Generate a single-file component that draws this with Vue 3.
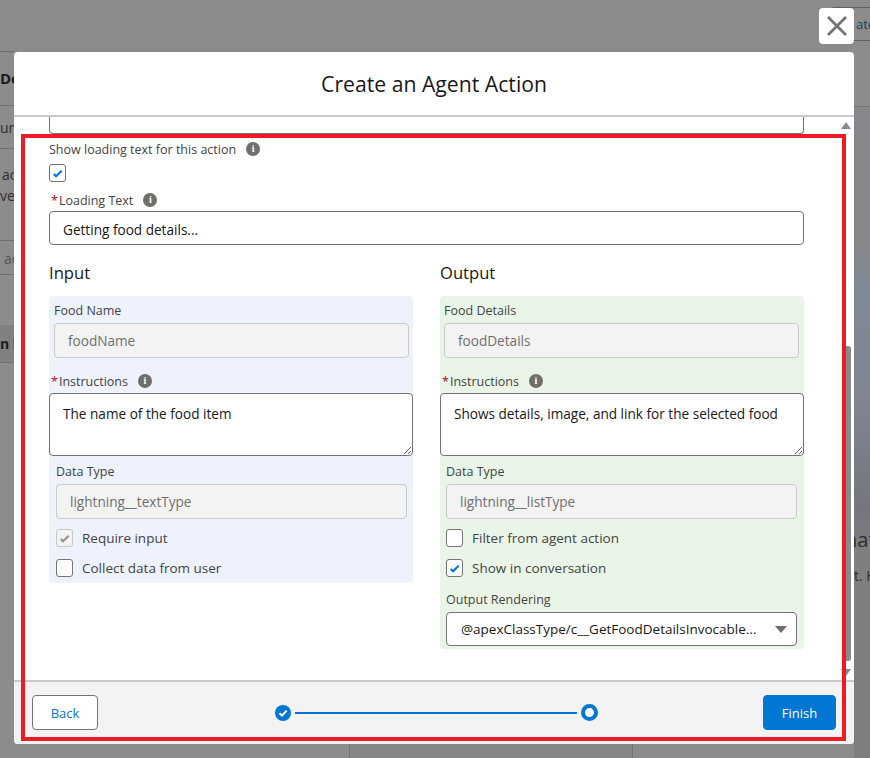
<template>
  <div class="page">
    <!-- dimmed page behind the modal -->
    <div class="backdrop">
      <div class="bg-line" style="top: 51px; width: 14px"></div>
      <div class="bg-line" style="top: 105px; width: 14px"></div>
      <div class="bg-line" style="top: 148px; width: 14px"></div>
      <div class="bg-line" style="top: 240px; width: 14px"></div>
      <div class="bg-line" style="top: 274px; width: 14px"></div>
      <div class="bg-line" style="top: 362px; width: 14px"></div>
      <div class="bg-band"></div>
      <div class="bg-image"></div>
      <div class="bg-bottom"></div>
      <span class="bg-text bold" style="left: 0; top: 67px">De</span>
      <span class="bg-text" style="left: 0; top: 118px">ur</span>
      <span class="bg-text" style="left: 2px; top: 165px">ac</span>
      <span class="bg-text" style="left: 0; top: 186px">ve</span>
      <span class="bg-text faint" style="left: 4px; top: 249px">ac</span>
      <span class="bg-text bold small" style="left: 0; top: 333px">n l</span>
      <span class="bg-text big" style="left: 845px; top: 528px">nat</span>
      <span class="bg-text" style="left: 854px; top: 566px">t. H</span>
      <span class="bg-btn">ato</span>
    </div>

    <button class="close-btn">
      <svg width="20" height="20" viewBox="0 0 20 20">
        <path d="M1 1 L19 19 M19 1 L1 19" stroke="#747474" stroke-width="2.8" fill="none" />
      </svg>
    </button>

    <div class="modal">
      <header class="modal-header">Create an Agent Action</header>

      <div class="modal-body">
        <div class="clipped-input"></div>

        <div class="label-row top-label">
          <span>Show loading text for this action</span>
          <span class="info">i</span>
        </div>
        <span class="check"><svg viewBox="0 0 12 12"><path d="M3 6.8 L4.8 8.6 L9.4 4.2" /></svg></span>

        <div class="label-row loading-label">
          <span class="req">*</span><span>Loading Text</span>
          <span class="info">i</span>
        </div>
        <input class="field loading-input" value="Getting food details..." readonly />

        <div class="columns">
          <section v-for="col in columns" :key="col.title" class="column">
            <h3>{{ col.title }}</h3>
            <div class="panel" :class="col.tone">
              <div class="name-block">
                <label>{{ col.nameLabel }}</label>
                <input class="field disabled" :value="col.name" readonly />
              </div>
              <div class="label-row instr-label">
                <span class="req">*</span><span>Instructions</span>
                <span class="info">i</span>
              </div>
              <textarea class="field area" :value="col.instructions" readonly></textarea>
              <div class="type-block">
                <label>Data Type</label>
                <input class="field disabled" :value="col.type" readonly />
                <div v-for="opt in col.options" :key="opt.text" class="option">
                  <span class="check" :class="{ off: opt.disabled }">
                    <svg v-if="opt.checked" viewBox="0 0 12 12"><path d="M3 6.8 L4.8 8.6 L9.4 4.2" /></svg>
                  </span>
                  <span>{{ opt.text }}</span>
                </div>
                <div v-if="col.rendering" class="rendering">
                  <label>Output Rendering</label>
                  <div class="field select">
                    <span>{{ col.rendering }}</span>
                    <i class="caret"></i>
                  </div>
                </div>
              </div>
            </div>
          </section>
        </div>

        <div class="scroll-up"></div>
        <div class="scroll-thumb"></div>
        <div class="scroll-down"></div>
      </div>

      <footer class="modal-footer">
        <button class="btn">Back</button>
        <div class="progress">
          <svg class="step" width="16" height="16" viewBox="0 0 16 16">
            <circle cx="8" cy="8" r="8" fill="#0176d3" />
            <path d="M4.4 8.2 L7 10.6 L11.6 5.6" stroke="#fff" stroke-width="2" fill="none" />
          </svg>
          <div class="bar"></div>
          <span class="ring"></span>
        </div>
        <button class="btn brand">Finish</button>
      </footer>
    </div>

    <div class="annotation"></div>
  </div>
</template>

<script setup>
const columns = [
  {
    title: "Input",
    tone: "blue",
    nameLabel: "Food Name",
    name: "foodName",
    instructions: "The name of the food item",
    type: "lightning__textType",
    options: [
      { text: "Require input", checked: true, disabled: true },
      { text: "Collect data from user", checked: false },
    ],
  },
  {
    title: "Output",
    tone: "green",
    nameLabel: "Food Details",
    name: "foodDetails",
    instructions: "Shows details, image, and link for the selected food",
    type: "lightning__listType",
    options: [
      { text: "Filter from agent action", checked: false },
      { text: "Show in conversation", checked: true },
    ],
    rendering: "@apexClassType/c__GetFoodDetailsInvocable...",
  },
];
</script>

<style>
body {
  margin: 0;
  overflow: hidden;
}
</style>

<style scoped>
.page {
  position: relative;
  width: 870px;
  height: 758px;
  overflow: hidden;
  font-family: "Open Sans", "Noto Sans", Arial, sans-serif;
  color: #181818;
  background: #8c8c8c;
}

.backdrop {
  position: absolute;
  inset: 0;
}

.bg-line {
  position: absolute;
  left: 0;
  height: 1px;
  background: #6f6f6f;
}

.bg-band {
  position: absolute;
  left: 0;
  top: 325px;
  width: 14px;
  height: 37px;
  background: #808080;
}

.bg-image {
  position: absolute;
  left: 854px;
  top: 106px;
  width: 16px;
  height: 652px;
  border-top: 1px solid #777;
  background: linear-gradient(180deg, #85878a 0%, #85878a 22%, #7f8996 28%, #80858f 45%, #75767f 62%, #7f7f7f 68%, #7f7f7f 100%);
}

.bg-bottom {
  position: absolute;
  left: 349px;
  top: 744px;
  width: 284px;
  height: 14px;
  box-sizing: border-box;
  border-left: 1px solid #747474;
  border-right: 1px solid #747474;
  background: #858585;
}

.bg-text {
  position: absolute;
  font-size: 14px;
  line-height: 20px;
  color: #2e2e2e;
  white-space: nowrap;
}

.bg-text.bold {
  font-size: 15px;
  font-weight: 700;
  line-height: 22px;
  color: #1c1c1c;
}

.bg-text.bold.small {
  font-size: 14px;
}

.bg-text.faint {
  color: #555;
}

.bg-text.big {
  font-size: 20px;
  line-height: 24px;
}

.bg-btn {
  position: absolute;
  left: 830px;
  top: 7px;
  width: 60px;
  height: 34px;
  box-sizing: border-box;
  border: 1px solid #5f5f5f;
  border-radius: 4px;
  padding-left: 25px;
  font-size: 13px;
  line-height: 32px;
  color: #123f66;
}

.close-btn {
  position: absolute;
  left: 819px;
  top: 8px;
  width: 35px;
  height: 36px;
  padding: 0;
  border: none;
  border-radius: 4px;
  background: #fff;
  display: flex;
  align-items: center;
  justify-content: center;
  z-index: 2;
}

.modal {
  position: absolute;
  left: 14px;
  top: 52px;
  width: 840px;
  height: 692px;
  display: flex;
  flex-direction: column;
  background: #fff;
  border-radius: 4px;
  overflow: hidden;
}

.modal-header {
  flex: none;
  box-sizing: border-box;
  height: 65px;
  border-bottom: 2px solid #c9c9c9;
  text-align: center;
  font-size: 21.2px;
  line-height: 63px;
}

.modal-body {
  position: relative;
  flex: 1;
  padding: 0 50px 0 35px;
  overflow: hidden;
}

.clipped-input {
  height: 16px;
  border: 1px solid #747474;
  border-top: none;
  border-radius: 0 0 4px 4px;
}

.label-row {
  display: flex;
  align-items: center;
  height: 18px;
  font-size: 12.5px;
  color: #444;
}

.top-label {
  margin-top: 6px;
}

.loading-label {
  margin-top: 9px;
  padding-left: 2px;
}

.req {
  color: #ba0517;
  margin-right: 1px;
}

.info {
  width: 14px;
  height: 14px;
  margin-left: 10px;
  border-radius: 50%;
  background: #706e6b;
  color: #fff;
  font-size: 10px;
  font-weight: 700;
  line-height: 14px;
  text-align: center;
  font-family: "Liberation Serif", serif;
}

.check {
  display: block;
  flex: none;
  box-sizing: border-box;
  width: 17px;
  height: 18px;
  margin-top: 6px;
  border: 1px solid #747474;
  border-radius: 3px;
  background: #fff;
}

.check svg {
  display: block;
  width: 100%;
  height: 100%;
  fill: none;
  stroke: #0176d3;
  stroke-width: 1.7;
}

.check.off {
  background: #f3f3f3;
  border-color: #c9c9c9;
}

.check.off svg {
  stroke: #939393;
}

.field {
  display: block;
  width: 100%;
  box-sizing: border-box;
  height: 35px;
  padding: 0 13px;
  border: 1px solid #747474;
  border-radius: 4px;
  background: #fff;
  font: inherit;
  font-size: 13.6px;
  color: #181818;
  outline: none;
}

.loading-input {
  height: 34px;
  margin-top: 2px;
  padding-top: 2px;
}

.columns {
  display: grid;
  grid-template-columns: 364px 364px;
  gap: 27px;
  margin-top: 17px;
  align-items: start;
}

.column h3 {
  margin: 0 0 13px;
  font-size: 16.6px;
  font-weight: 400;
  line-height: 21px;
}

.panel {
  border-radius: 4px;
  padding-bottom: 3px;
}

.panel.blue {
  background: #edf2fd;
  padding-bottom: 6px;
}

.panel.green {
  background: #e9f5e6;
}

.panel label {
  display: block;
  font-size: 12.5px;
  line-height: 18px;
  color: #444;
}

.name-block {
  padding: 6px 4px 0 5px;
}

.green .name-block {
  padding: 6px 5px 0 4px;
}

.name-block label {
  margin-bottom: 3px;
}

.field.disabled {
  background: #f3f3f3;
  border-color: #c9c9c9;
  color: #6f6f6f;
}

.instr-label {
  margin-top: 14px;
  padding-left: 2px;
}

.field.area {
  height: 63px;
  margin-top: 3px;
  padding: 10px 13px;
  resize: vertical;
  overflow: hidden;
  display: block;
}

.type-block {
  padding: 7px 6px 0 7px;
}

.green .type-block {
  padding: 7px 7px 0 6px;
}

.type-block label {
  margin-bottom: 3px;
}

.option {
  display: flex;
  align-items: center;
  gap: 9px;
  height: 18px;
  margin-top: 10px;
  font-size: 13.5px;
  color: #444;
}

.option + .option {
  margin-top: 12px;
}

.option .check {
  margin-top: 0;
}

.rendering {
  margin-top: 14px;
}

.select {
  display: flex;
  align-items: center;
  justify-content: space-between;
  height: 34px;
  padding: 0 9px 0 14px;
  font-size: 13.5px;
}

.caret {
  width: 0;
  height: 0;
  border-left: 6px solid transparent;
  border-right: 6px solid transparent;
  border-top: 7px solid #706e6b;
}

.scroll-up,
.scroll-down {
  position: absolute;
  right: 3px;
  width: 0;
  height: 0;
  border-left: 5px solid transparent;
  border-right: 5px solid transparent;
}

.scroll-up {
  top: 5px;
  border-bottom: 7px solid #8a8a8a;
}

.scroll-down {
  bottom: 4px;
  border-top: 7px solid #8a8a8a;
}

.scroll-thumb {
  position: absolute;
  right: 3px;
  top: 229px;
  width: 7px;
  height: 315px;
  border-radius: 3px;
  background: #8a8a8a;
}

.modal-footer {
  flex: none;
  box-sizing: border-box;
  height: 64px;
  display: flex;
  align-items: center;
  justify-content: space-between;
  padding: 0 18px 1px;
  border-top: 2px solid #c9c9c9;
  background: #f3f3f3;
}

.btn {
  box-sizing: border-box;
  width: 66px;
  height: 35px;
  border: 1px solid #747474;
  border-radius: 4px;
  background: #fff;
  color: #0176d3;
  font: inherit;
  font-size: 13px;
  padding: 0;
}

.btn.brand {
  width: 73px;
  border-color: #0176d3;
  background: #0176d3;
  color: #fff;
}

.progress {
  display: flex;
  align-items: center;
  gap: 4px;
  margin-left: 11px;
}

.step {
  display: block;
}

.bar {
  width: 282px;
  height: 2px;
  background: #0176d3;
}

.ring {
  width: 17px;
  height: 17px;
  box-sizing: border-box;
  border: 4px solid #0176d3;
  border-radius: 50%;
  background: #fff;
}

.annotation {
  position: absolute;
  left: 21px;
  top: 134px;
  width: 825px;
  height: 607px;
  box-sizing: border-box;
  border: 4px solid #ed1c24;
  pointer-events: none;
}
</style>
